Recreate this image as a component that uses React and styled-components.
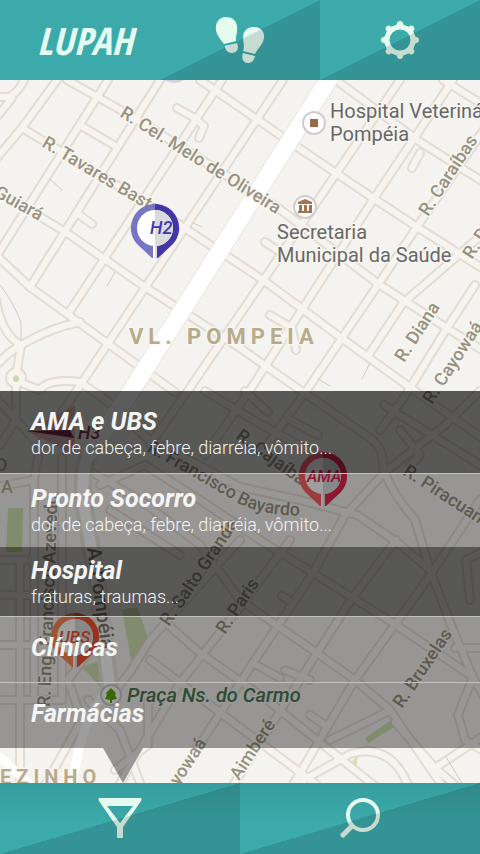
import React from "react";
import styled, { createGlobalStyle, css } from "styled-components";

const GlobalStyle = createGlobalStyle`
  *, *::before, *::after { box-sizing: border-box; }
  body { margin: 0; font-family: Roboto, "Liberation Sans", sans-serif; }
  button { border: 0; padding: 0; font: inherit; color: inherit; cursor: pointer; background: none; }
  h1, h2, p, ul { margin: 0; padding: 0; }
`;

const Page = styled.div`
  min-height: 100vh;
  display: flex;
  flex-direction: column;
`;

const Header = styled.header`
  display: grid;
  grid-template-columns: repeat(3, 1fr);
  height: 80px;
  background: #3caaab;
`;

const Logo = styled.h1`
  display: flex;
  align-items: center;
  padding-left: 37px;
  color: #e5fbef;
  font-family: "Open Sans Condensed", "Roboto Condensed", "Liberation Sans Narrow", "Liberation Sans", sans-serif;
  font-size: 38px;
  line-height: 48px;
  font-style: italic;
  font-weight: 700;
`;

const BarButton = styled.button`
  position: relative;
  display: flex;
  align-items: center;
  justify-content: center;
  color: #e5fbef;

  &::after {
    content: "";
    position: absolute;
    inset: 0;
    background: linear-gradient(to bottom right, transparent 50%, rgba(0, 0, 0, 0.13) 50%);
  }
`;

const Footer = styled.footer`
  display: grid;
  grid-template-columns: repeat(2, 1fr);
  height: 71px;
  background: linear-gradient(#379e9e, #3caaab 60%);
`;

const MapArea = styled.main`
  position: relative;
  flex: 1;
  display: flex;
  flex-direction: column;
  justify-content: flex-end;
  padding: 311px 0 35px;
  overflow: hidden;
  background: #f4f3ef;
`;

const MapCanvas = styled.svg`
  position: absolute;
  inset: 0;
  width: 100%;
  height: 100%;
`;

const Panel = styled.ul`
  position: relative;
  list-style: none;

  &::after {
    content: "";
    position: absolute;
    top: 100%;
    left: 103px;
    width: 40px;
    height: 35px;
    background: rgba(0, 0, 0, 0.38);
    clip-path: polygon(0 0, 100% 0, 50% 100%);
  }
`;

const sizes = {
  tall: css`height: 82px; padding-top: 4px;`,
  medium: css`height: 73px;`,
  short: css`height: 69px; padding-top: 2px;`,
  single: css`height: 65px; padding-bottom: 4px;`,
};

const Item = styled.li`
  border-bottom: ${(p) => (p.$line ? "1px solid #c2c2c0" : "0")};
`;

const ItemButton = styled.button`
  display: flex;
  flex-direction: column;
  justify-content: center;
  align-items: flex-start;
  width: 100%;
  padding: 0 31px;
  text-align: left;
  color: #f5f5f4;
  background: ${(p) => (p.$dark ? "rgba(0, 0, 0, 0.64)" : "rgba(0, 0, 0, 0.38)")};
  ${(p) => sizes[p.$size]}
`;

const ItemTitle = styled.span`
  font-size: 25px;
  line-height: 28px;
  font-weight: 700;
  font-style: italic;
`;

const ItemText = styled.span`
  font-size: 18px;
  line-height: 24px;
  font-weight: 300;
`;

const Label = styled.text`
  font-family: Roboto, "Liberation Sans", sans-serif;
  font-size: ${(p) => p.$size || 18}px;
  font-weight: ${(p) => p.$weight || 500};
  font-style: ${(p) => (p.$italic ? "italic" : "normal")};
  letter-spacing: ${(p) => (p.$district ? "5px" : "normal")};
  fill: ${(p) => p.$fill || "#97917f"};
  stroke: #f7f6f2;
  stroke-width: 3px;
  stroke-linejoin: round;
  paint-order: stroke;
`;

const PinText = styled.text`
  font-family: Roboto, "Liberation Sans", sans-serif;
  font-size: ${(p) => p.$size || 18}px;
  font-weight: 500;
  font-style: italic;
`;

const roads = [
  "M57 80 L22 128 L-5 160", "M108 80 L-4 257", "M160 80 L30 287", "M222 80 L68 314", "M283 80 L77 390 L40 446",
  "M400 80 L187 392 L150 444", "M453 80 L373 200 L250 390 L205 455", "M485 128 L417 227 L307 390 L262 452",
  "M484 233 L403 303 L370 353", "M475 285 L447 328 L405 396 L380 430", "M67 80 L133 117 L277 207 L377 283 L447 328 L485 352",
  "M22 128 L150 205 L263 280 L340 337 L415 391 L485 440", "M80 125 L117 147", "M-4 190 L67 233 L145 287 L240 348 L300 390 L370 438 Q384 448 383 468 Q390 490 415 520 L430 570 L453 630 L473 677 L486 700",
  "M-4 255 L30 287 L107 343 L175 392", "M200 80 L287 140 L373 198 L417 227 L485 270", "M340 83 L417 140 L485 183", "M443 80 L485 106",
  "M80 322 Q50 328 21 345 Q8 352 -4 366", "M21 345 L17 370", "M-4 300 Q2 335 21 345", "M24 384 L40 390 Q48 378 80 382 L120 410",
  "M0 97 L10 97 Q20 90 24 80", "M-4 118 L12 98", "M78 214 L92 224", "M177 108 L193 117 L204 126 L199 138", "M412 168 L420 153",
  "M265 242 L283 254", "M270 315 L292 328 L296 350", "M16 388 L16 420 L0 445", "M-4 398 L40 446 L34 480 L0 486", "M34 480 L34 700",
  "M62 458 L62 700", "M20 560 L20 783", "M0 560 L34 560", "M0 645 L34 645", "M0 595 L34 595", "M100 395 L147 438 L240 487 L300 500 L357 515 L397 542 L430 570",
  "M205 391 L262 425 L330 462", "M245 391 L268 412", "M290 420 L318 435", "M88 470 L140 500 L200 545 L240 600 L317 653 L355 680 L390 710 L445 790",
  "M100 485 L145 465 L200 500 L260 540 L313 573 L393 623 L473 677", "M110 510 L180 555", "M480 391 L445 425 L385 472 L345 515 L313 573 L253 663 L170 790",
  "M384 405 L480 465", "M400 430 L420 455 L410 466", "M396 540 L353 597 L317 653 L230 790", "M480 500 L427 580 L355 680 L290 790", "M240 540 L213 570 L150 640 L130 672 L108 700",
  "M290 540 L240 607 L180 683 L120 783", "M165 622 L200 653 L267 700 L317 740 L380 790", "M150 660 L230 720 L317 785", "M486 550 L466 560 L470 600",
  "M455 648 L485 648", "M473 677 L458 715 L465 740 L485 752", "M295 785 L350 754 Q390 742 408 785", "M330 740 L375 718 L390 710", "M395 722 L435 768 L485 735",
  "M435 768 L455 785", "M253 663 L280 678", "M285 670 L310 680", "M310 715 L325 725", "M282 596 L293 603", "M90 650 L68 680 L82 720 L45 785", "M88 700 L120 730 L140 783",
  "M0 700 L62 700", "M148 700 L148 745 L115 770",
];

const thinRoads = ["M0 285 Q12 300 21 322 L21 340", "M50 179 L62 190", "M115 272 L107 286", "M193 223 L202 227", "M370 363 L362 379", "M318 379 L330 386", "M446 757 L462 783"];

const streets = [
  { t: "R. Cel. Melo de Oliveira", x: 119, y: 116, r: 32 },
  { t: "R. Tavares Bastos", x: 41, y: 146, r: 31 },
  { t: "R. Guiará", x: 39, y: 221, r: 29, end: true },
  { t: "R. Caraíbas", x: 428, y: 217, r: -57 },
  { t: "R. Diderot", x: 472, y: 260, r: -57 },
  { t: "R. Diana", x: 404, y: 363, r: -57 },
  { t: "R. Cayowaá", x: 432, y: 405, r: -57 },
  { t: "R. Cajaíba", x: 235, y: 438, r: 36 },
  { t: "R. Piracuama", x: 402, y: 474, r: 33 },
  { t: "R. Eng. Francisco Azevedo", x: 50, y: 707, r: -88 },
  { t: "R. Salto Grande", x: 169, y: 627, r: -56 },
  { t: "R. Paris", x: 225, y: 635, r: -56 },
  { t: "R. Bruxelas", x: 402, y: 709, r: -56 },
  { t: "R. Cayowaá", x: 207, y: 743, r: -57, end: true },
  { t: "Aimberé", x: 239, y: 781, r: -57 },
];

function Pin({ x, y, left, right, label, dx, size }) {
  return (
    <g transform={`translate(${x} ${y})`}>
      <path d="M0 -24 A24 24 0 0 0 -18 16 L-3 30 L0 30 Z" fill={left} />
      <path d="M0 -24 A24 24 0 0 1 18 16 L3 30 L0 30 Z" fill={right} />
      <circle r="18" fill="#fff" />
      <path d="M0 -18 A18 18 0 0 1 0 18 Z" fill="#d9dbde" />
      <rect x="-2" y="15" width="2" height="16" fill="#fff" />
      <rect x="0" y="15" width="2" height="16" fill="#dedfe2" />
      <PinText x={dx} y="6" fill={right} $size={size}>{label}</PinText>
    </g>
  );
}

function CityMap() {
  return (
    <MapCanvas viewBox="0 80 480 703" preserveAspectRatio="xMidYMid slice" role="img" aria-label="Mapa de Vila Pompeia">
      <g fill="#cfe2ad">
        <path d="M8 508 H23 L22 552 H6 Z" />
        <path d="M122 610 L137 607 L149 640 L132 665 Z" />
        <path d="M82 667 L99 661 L105 692 Z" />
        <path d="M365 738 L390 721 L394 727 L368 743 Z" />
      </g>
      <g fill="none" strokeLinejoin="round" strokeLinecap="round">
        <g stroke="#e3dcd3" strokeWidth="10">{roads.map((d) => <path key={d} d={d} />)}<circle cx="16" cy="378" r="6" /></g>
        <g stroke="#f7f4f0" strokeWidth="6">{roads.map((d) => <path key={d} d={d} />)}<circle cx="16" cy="378" r="6" /></g>
        <g stroke="#d0cbc1" strokeWidth="1">{thinRoads.map((d) => <path key={d} d={d} />)}</g>
        <path d="M332 74 L128 396 L90 452 Q80 470 84 505 L98 590 L110 690" stroke="#ebe6df" strokeWidth="19" />
        <path d="M332 74 L128 396 L90 452" stroke="#fff" strokeWidth="17" />
        <path d="M90 452 Q80 470 84 505 L98 590 L110 690" stroke="#fff" strokeWidth="11" />
        <path d="M108 690 Q80 720 73 783 M0 757 L28 783" stroke="#fff" strokeWidth="9" />
      </g>
      <circle cx="16" cy="379" r="3" fill="#cbd8ac" />
      <path d="M352 761 L358 756 L356 767 Z" fill="#cfe2ad" />
      {streets.map((s) => (
        <Label key={s.t + s.x} x={s.x} y={s.y} textAnchor={s.end ? "end" : "start"} transform={`rotate(${s.r} ${s.x} ${s.y})`}>{s.t}</Label>
      ))}
      <path id="bayardo" d="M146 451 Q200 480 238 503 Q262 516 310 516" fill="none" />
      <Label><textPath href="#bayardo">R. Francisco Bayardo</textPath></Label>
      <Label $size={20} x="87" y="548" transform="rotate(82 87 548)" $fill="#7c776c">A. Pompéia</Label>

      <Label $district $size={22} $weight={700} $fill="#b8ab8a" x="129" y="344">VL. POMPEIA</Label>
      <Label $district $size={20} $weight={700} $fill="#b8ab8a" x="0" y="784">EZINHO</Label>
      <Label $fill="#b8ab8a" x="-5" y="471">O</Label>
      <Label $fill="#b8ab8a" x="1" y="493">A</Label>

      <Label $size={20} $weight={400} $fill="#686868" x="330" y="118">Hospital Veterinário</Label>
      <Label $size={20} $weight={400} $fill="#686868" x="330" y="141">Pompéia</Label>
      <Label $size={20} $weight={400} $fill="#686868" x="277" y="239">Secretaria</Label>
      <Label $size={20} $weight={400} $fill="#686868" x="277" y="262">Municipal da Saúde</Label>
      <Label $size={20} $italic $fill="#4c7854" x="127" y="702">Praça Ns. do Carmo</Label>

      <g fill="#fff" stroke="#cfcdcf" strokeWidth="2">
        <circle cx="314" cy="123" r="11" /><circle cx="305" cy="207" r="11" /><circle cx="111" cy="695" r="10" />
      </g>
      <rect x="310" y="119" width="8" height="8" fill="#9a6b4b" />
      <path d="M298 204 V202 L305 199 L312 202 V204 Z M299 205 h3 v6 h-3 Z M304 205 h3 v6 h-3 Z M309 205 h3 v6 h-3 Z M298 211 h14 v2 h-14 Z" fill="#a5724f" />
      <path d="M111 688 L116 693 L115 695 L117 699 L112 700 V703 H110 V700 L105 699 L107 695 L106 693 Z" fill="#5ba800" />

      <path d="M164 80 Q174 86 184 80 Z" fill="#d2d2da" />
      <Pin x={155} y={228} left="#7775c5" right="#4337a8" label="H2" dx={-5} />
      <Pin x={323} y={476} left="#ff6066" right="#e5254f" label="AMA" dx={-16} size={16} />
      <Pin x={75} y={637} left="#ff8850" right="#f65132" label="UBS" dx={-16} size={17} />
      <path d="M27 431 L75 405 V455 Z" fill="#dfa2a8" opacity="0.6" />
      <path d="M27 431 L70 430 L74 438 Z" fill="#7c2c4c" />
      <PinText x="78" y="439" fill="#8a3656">H3</PinText>
    </MapCanvas>
  );
}

const FootprintsIcon = () => (
  <svg width="50" height="50" viewBox="215 15 50 50" fill="currentColor" aria-hidden="true">
    <path d="M226 17 C219 17 215 23 216 30 C217 36 221 40 224 44 L236 41 C235 37 238 33 237 26 C236 20 232 17 226 17 Z" />
    <path d="M225 46 L237 43 C240 50 235 53 232 53 C228 53 225 50 225 46 Z" />
    <path d="M254 27 C248 27 244 30 243 36 C243 42 245 46 243 51 L255 54 C257 49 263 45 264 38 C265 31 260 27 254 27 Z" />
    <path d="M243 53 L255 56 C254 61 251 63 248 63 C243 63 241 58 243 53 Z" />
  </svg>
);

const teeth = [0, 45, 90, 135, 180, 225, 270, 315];
const GearIcon = () => (
  <svg width="40" height="40" viewBox="-20 -20 40 40" fill="currentColor" aria-hidden="true">
    <circle r="13" fill="none" stroke="currentColor" strokeWidth="5" />
    {teeth.map((a) => (
      <path key={a} transform={`rotate(${a})`} d="M-6 -14 Q-3 -15 -3 -16 A3 3 0 0 1 3 -16 Q3 -15 6 -14 Z" />
    ))}
  </svg>
);

const FunnelIcon = () => (
  <svg width="44" height="41" viewBox="0 0 44 41" fill="currentColor" fillRule="evenodd" aria-hidden="true">
    <path d="M1 0 H43 Q44 1 43 3 L25 29 V39 Q25 40 24 40 H20 Q19 40 19 39 V29 L1 3 Q0 1 1 0 Z M9 8 L22 25 L35 8 Z" />
  </svg>
);

const SearchIcon = () => (
  <svg width="40" height="41" viewBox="0 0 40 41" fill="none" stroke="currentColor" aria-hidden="true">
    <circle cx="23" cy="17" r="15" strokeWidth="4" />
    <path d="M11 29 L3 37" strokeWidth="5" strokeLinecap="round" />
  </svg>
);

const categories = [
  { title: "AMA e UBS", text: "dor de cabeça, febre, diarréia, vômito...", size: "tall", dark: true, line: true },
  { title: "Pronto Socorro", text: "dor de cabeça, febre, diarréia, vômito...", size: "medium" },
  { title: "Hospital", text: "fraturas, traumas...", size: "short", dark: true, line: true },
  { title: "Clínicas", size: "single", line: true },
  { title: "Farmácias", size: "single" },
];

export default function App() {
  return (
    <Page>
      <GlobalStyle />
      <Header>
        <Logo>LUPAH</Logo>
        <BarButton aria-label="Percurso"><FootprintsIcon /></BarButton>
        <BarButton aria-label="Configurações"><GearIcon /></BarButton>
      </Header>
      <MapArea>
        <CityMap />
        <Panel>
          {categories.map((c) => (
            <Item key={c.title} $line={c.line}>
              <ItemButton $dark={c.dark} $size={c.size}>
                <ItemTitle>{c.title}</ItemTitle>
                {c.text && <ItemText>{c.text}</ItemText>}
              </ItemButton>
            </Item>
          ))}
        </Panel>
      </MapArea>
      <Footer>
        <BarButton aria-label="Filtrar"><FunnelIcon /></BarButton>
        <BarButton aria-label="Buscar"><SearchIcon /></BarButton>
      </Footer>
    </Page>
  );
}
